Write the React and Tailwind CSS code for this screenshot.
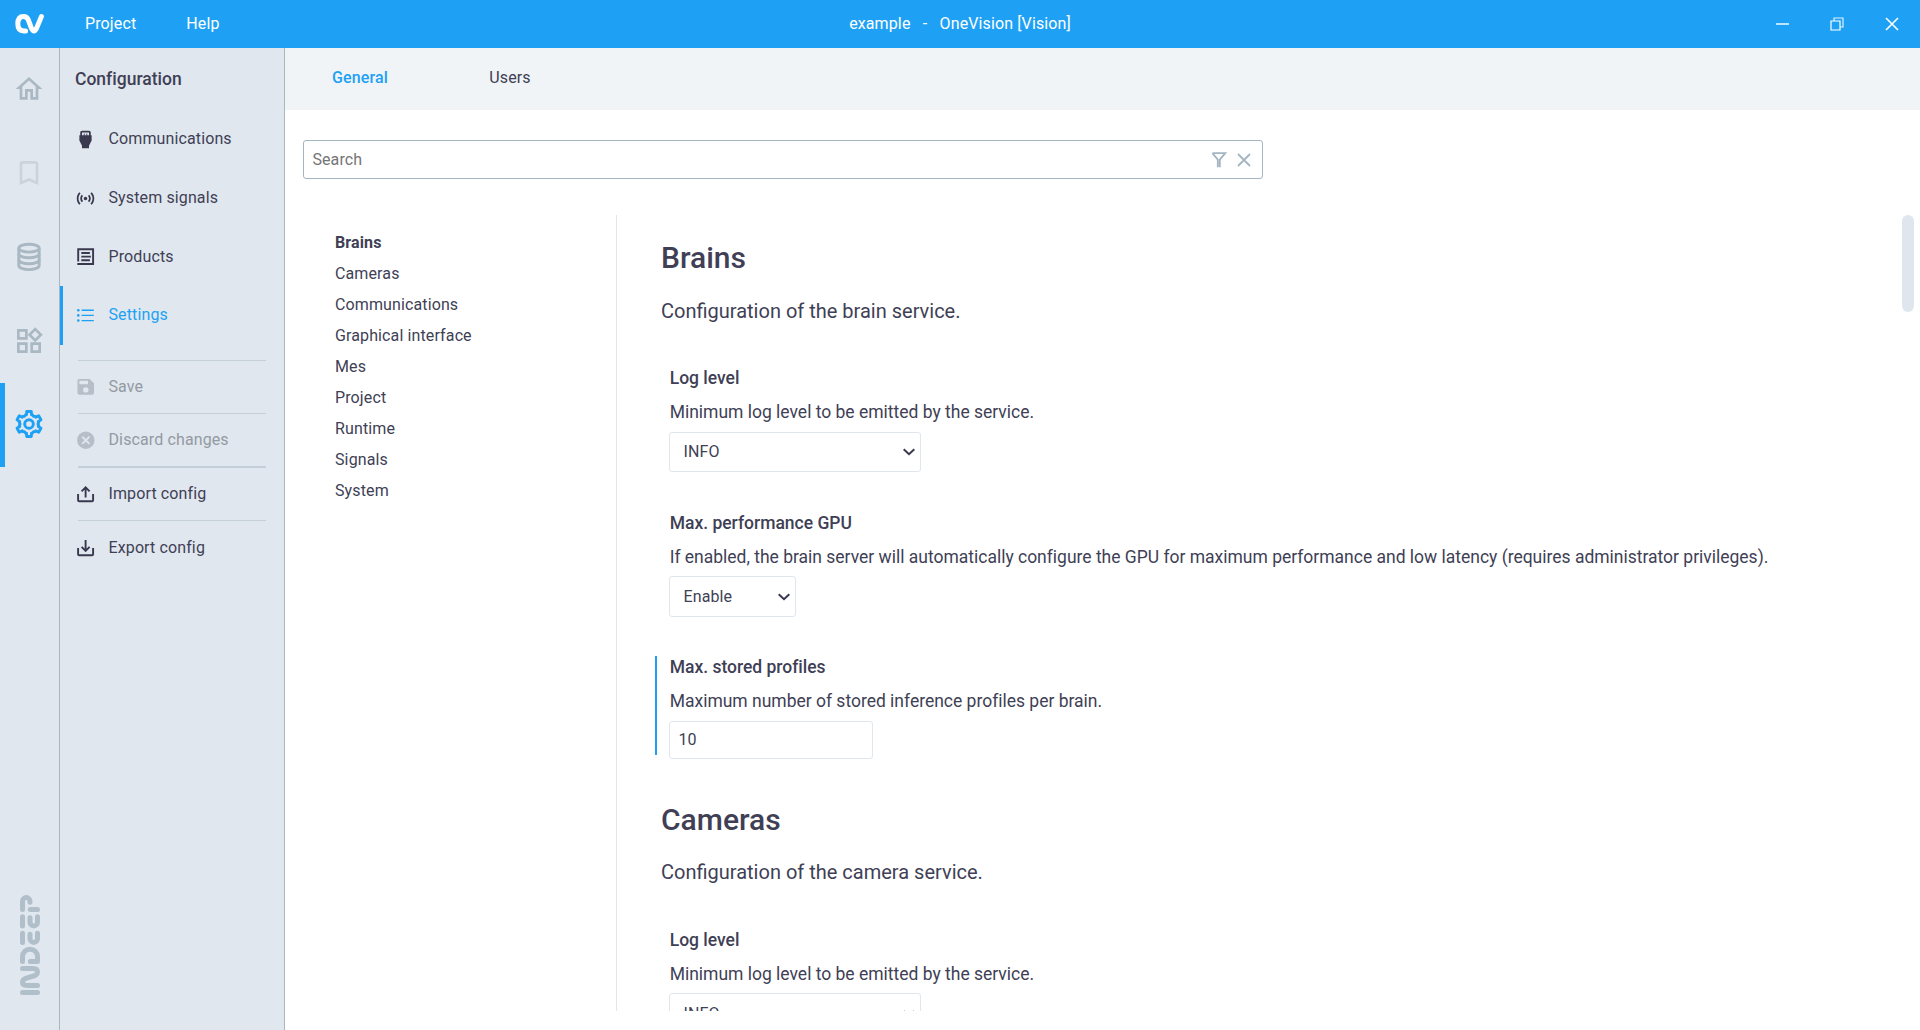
import React from "react";
import {
  MdOutlineHome,
  MdBookmarkBorder,
  MdOutlineWidgets,
  MdSettingsInputHdmi,
  MdSensors,
} from "react-icons/md";

const BrandMark = () => (
  <svg width="30" height="22" viewBox="0 0 30 22" fill="none" stroke="#fff" strokeWidth="5" strokeLinecap="round" strokeLinejoin="round">
    <path d="M10.6 17.9H8.8Q2.8 17.9 2.8 10.8Q2.8 3.4 8.6 3.4Q12 3.4 13.2 6.6L16.6 15.6Q19 20.2 21.4 15.6L26.4 3.6" />
  </svg>
);

const IndeepLogo = () => (
  <svg width="20" height="100" viewBox="0 0 20 100" fill="none" stroke="#b1bfca" strokeWidth="5" strokeLinecap="round" strokeLinejoin="round">
    <path d="M2.5 14.5V6.3A3.75 3.75 0 0 1 10 6.3V7.3" />
    <path d="M10.3 14.5H17.5" />
    <path d="M2.5 21.7V31M10 22.8V27.2A3.75 3.75 0 0 0 17.5 27.2V21.7" />
    <path d="M2.5 38.2V47.5M10 39.3V43.7A3.75 3.75 0 0 0 17.5 43.7V38.2" />
    <path d="M2.5 66.5V61.5A7.5 7.2 0 0 1 17.5 61.5V66.5H10.3" />
    <path d="M2.5 73.5H13Q17.5 73.5 17.5 77Q17.5 80 13.5 81L6.5 83.2Q2.5 84.5 2.5 87.3Q2.5 90.5 7 90.5H17.5" />
    <path d="M2.5 97.5H17.5" />
  </svg>
);

const DatabaseIcon = () => (
  <svg width="32" height="32" viewBox="0 0 32 32" fill="none" stroke="currentColor" strokeWidth="2.9">
    <ellipse cx="16" cy="7.2" rx="10.2" ry="3.9" />
    <path d="M5.8 7.2V24.6C5.8 26.9 10.4 28.6 16 28.6S26.2 26.9 26.2 24.6V7.2" />
    <path d="M5.8 12.8C5.8 15.1 10.4 16.8 16 16.8S26.2 15.1 26.2 12.8" />
    <path d="M5.8 18.7C5.8 21 10.4 22.7 16 22.7S26.2 21 26.2 18.7" />
  </svg>
);

// Six-toothed gear outline, listed as [radius, angle offset] around each tooth.
const TOOTH = [[8.9, -30], [9.9, -20], [9.6, -15], [12.7, -10.5], [12.7, 10.5], [9.6, 15], [9.9, 20]];
const GEAR = [0, 60, 120, 180, 240, 300]
  .flatMap((base) =>
    TOOTH.map(([r, offset]) => {
      const a = ((base + offset - 90) * Math.PI) / 180;
      return `${(16 + r * Math.cos(a)).toFixed(2)},${(16 + r * Math.sin(a)).toFixed(2)}`;
    })
  )
  .join(" ");

const GearIcon = () => (
  <svg width="32" height="32" viewBox="0 0 32 32" fill="none" stroke="currentColor" strokeWidth="2.9" strokeLinejoin="round">
    <polygon points={GEAR} />
    <circle cx="16" cy="16" r="4.3" />
  </svg>
);

const ProductsIcon = () => (
  <svg width="22" height="22" viewBox="0 0 22 22" fill="none" stroke="currentColor" strokeWidth="1.9">
    <path d="M3.2 15.6V3.2H18.1V18H2.3" />
    <path d="M6.3 7H14.9M6.3 10.6H15.9M6.3 14.2H14.9" />
  </svg>
);

const ListIcon = () => (
  <svg width="22" height="22" viewBox="0 0 22 22" fill="currentColor">
    <path d="M6.6 4.6H18.8V5.9H6.6zM6.6 9.8H18.8V11.1H6.6zM6.6 14.9H18.8V16.2H6.6z" />
    <circle cx="3.3" cy="5.2" r="1.3" />
    <circle cx="3.3" cy="10.4" r="1.3" />
    <circle cx="3.3" cy="15.5" r="1.3" />
  </svg>
);

const SaveIcon = () => (
  <svg width="22" height="22" viewBox="0 0 22 22" fill="currentColor" fillRule="evenodd">
    <path d="M4.3 3H14.6L19 7.2V16.9A1.8 1.8 0 0 1 17.2 18.7H4.3A1.8 1.8 0 0 1 2.5 16.9V4.8A1.8 1.8 0 0 1 4.3 3ZM4.4 4.7V8.3H13V4.7ZM10.8 11.2A2.7 2.7 0 1 0 10.8 16.6A2.7 2.7 0 1 0 10.8 11.2Z" />
  </svg>
);

const DiscardIcon = () => (
  <svg width="22" height="22" viewBox="0 0 22 22">
    <circle cx="10.8" cy="11.2" r="8.7" fill="currentColor" />
    <path d="M7.2 7.6L14.4 14.8M14.4 7.6L7.2 14.8" stroke="#e0e7ee" strokeWidth="1.8" />
  </svg>
);

const ImportIcon = () => (
  <svg width="22" height="22" viewBox="0 0 22 22" fill="none" stroke="currentColor" strokeWidth="1.9">
    <path d="M3.1 11V17.2Q3.1 18.3 4.2 18.3H17Q18.1 18.3 18.1 17.2V11" />
    <path d="M10.6 14.6V4.6M6.6 8.4L10.6 4.4L14.6 8.4" />
  </svg>
);

const ExportIcon = () => (
  <svg width="22" height="22" viewBox="0 0 22 22" fill="none" stroke="currentColor" strokeWidth="1.9">
    <path d="M3.1 11V17.2Q3.1 18.3 4.2 18.3H17Q18.1 18.3 18.1 17.2V11" />
    <path d="M10.6 3V13.6M6.6 9.9L10.6 13.9L14.6 9.9" />
  </svg>
);

const Chevron = () => (
  <svg width="14" height="10" viewBox="0 0 14 10" fill="none" stroke="#39384f" strokeWidth="2">
    <path d="M1.7 2.2L7 7.2L12.3 2.2" />
  </svg>
);

function TitleBar() {
  return (
    <header className="grid h-12 shrink-0 grid-cols-3 items-center bg-[#1ea1f4] text-white">
      <div className="flex items-center">
        <div className="ml-[15px] mr-[39px]"><BrandMark /></div>
        <span className="w-[102px] pl-[1px]">Project</span>
        <span className="pl-[0.3px]">Help</span>
      </div>
      <div className="whitespace-pre text-center">{"example   -   OneVision [Vision]"}</div>
      <div className="flex items-center justify-end gap-[41px] pr-[21px]">
        <svg width="14" height="14" viewBox="0 0 14 14" fill="#fff"><path fillOpacity=".7" d="M1 6H14V8H1z" /></svg>
        <svg width="14" height="14" viewBox="0 0 14 14" fill="none" stroke="#fff" strokeWidth="1.2">
          <path d="M1 4H10V13H1z" />
          <path d="M4 4V1H13V10H10" strokeOpacity=".85" />
        </svg>
        <svg width="14" height="14" viewBox="0 0 14 14" fill="none" stroke="#fff" strokeWidth="1.6"><path d="M1 1L13 13M13 1L1 13" /></svg>
      </div>
    </header>
  );
}

function RailItem({ children, active, dim }) {
  return (
    <div className="flex h-[83.75px] items-center">
      <div className={active ? "h-full w-[5px] bg-[#1ea1f4]" : "w-[5px]"} />
      <div className={"-mt-[1px] ml-[8px] " + (active ? "text-[#1ea1f4]" : dim ? "text-[#cbd4da]" : "text-[#a9b8c2]")}>{children}</div>
    </div>
  );
}

function Rail() {
  return (
    <nav className="flex w-[60px] shrink-0 flex-col border-r border-[#a9b8c0] bg-[#e0e7ee]">
      <RailItem><MdOutlineHome size={32} /></RailItem>
      <RailItem dim><MdBookmarkBorder size={32} /></RailItem>
      <RailItem><DatabaseIcon /></RailItem>
      <RailItem><MdOutlineWidgets size={32} /></RailItem>
      <RailItem active><GearIcon /></RailItem>
      <div className="mb-[35px] ml-5 mt-auto"><IndeepLogo /></div>
    </nav>
  );
}

function PanelItem({ icon, label, active }) {
  return (
    <div className={"flex h-[59px] items-center " + (active ? "text-[#1ea1f4]" : "")}>
      <div className={active ? "h-full w-[3px] bg-[#1ea1f4]" : "w-[3px]"} />
      <div className="ml-[11.5px] mt-[1px] flex w-[22px] justify-center text-[#39384f]">
        <span className={active ? "text-[#1ea1f4]" : ""}>{icon}</span>
      </div>
      <span className={"ml-[12px] " + (active ? "-mt-[1px]" : "")}>{label}</span>
    </div>
  );
}

function PanelAction({ icon, label, disabled, thick, last }) {
  return (
    <div className={"ml-[18px] mr-[18px] flex items-center border-[#c3d0d9] " + (thick ? "h-[54px] border-t-2 " : "h-[53px] border-t ") + (last ? "pt-[2px] " : "") + (disabled ? "text-[#939aa3]" : "")}>
      <div className={"-ml-[3.5px] flex w-[22px] justify-center " + (disabled ? "text-[#b8bec8]" : "text-[#39384f]")}>{icon}</div>
      <span className="ml-[12px]">{label}</span>
    </div>
  );
}

function ConfigPanel() {
  return (
    <aside className="w-[225px] shrink-0 border-r border-[#a9b8c0] bg-[#e0e7ee]">
      <h2 className="flex h-[61px] items-center pl-[15px] pt-[1px] text-[17.5px] font-medium tracking-[0.01px]">Configuration</h2>
      <PanelItem icon={<MdSettingsInputHdmi size={21} />} label="Communications" />
      <PanelItem icon={<MdSensors size={21} />} label="System signals" />
      <PanelItem icon={<ProductsIcon />} label="Products" />
      <PanelItem icon={<ListIcon />} label="Settings" active />
      <div className="mt-[15px]">
        <PanelAction icon={<SaveIcon />} label="Save" disabled />
        <PanelAction icon={<DiscardIcon />} label="Discard changes" disabled />
        <PanelAction icon={<ImportIcon />} label="Import config" thick />
        <PanelAction icon={<ExportIcon />} label="Export config" last />
      </div>
    </aside>
  );
}

function SearchBox() {
  return (
    <div className="ml-[18px] mt-[30px] flex h-[39px] w-[960px] shrink-0 items-center rounded-[3px] border border-[#a4b5c2] pl-[8.4px] text-[#757575]">
      <span>Search</span>
      <svg className="ml-auto mr-[10px]" width="16" height="16" viewBox="0 0 16 16" fill="none" stroke="#a4b5c2" strokeWidth="1.8">
        <path d="M1.4 1.2H14.2L8.8 7.6V15.2M1.4 1.2L6.8 7.6V15.2" />
      </svg>
      <svg className="mr-[11.5px]" width="14" height="14" viewBox="0 0 14 14" fill="none" stroke="#a4b5c2" strokeWidth="1.8">
        <path d="M1 1L13 13M13 1L1 13" />
      </svg>
    </div>
  );
}

function SelectBox({ value, width }) {
  return (
    <div className={"flex h-[40.3px] items-center justify-between rounded-[3px] border border-[#dfe6ed] pl-[13.5px] pr-[4px] " + width}>
      <span>{value}</span>
      <div className="mt-[1px]"><Chevron /></div>
    </div>
  );
}

function Setting({ label, description, changed, last, children }) {
  return (
    <div className={"flex " + (last ? "mb-[37.6px]" : "mb-[38.5px]")}>
      <div className={changed ? "mb-[4px] mt-[1px] w-[2px] bg-[#1ea1f4]" : "w-[2px]"} />
      <div className="ml-3">
        <h3 className="h-6 pl-[0.7px] text-[17.5px] font-medium leading-6 tracking-[-0.01px]">{label}</h3>
        <p className="mb-[7.8px] mt-[10px] h-6 whitespace-nowrap pl-[0.7px] text-[17.5px] leading-6 tracking-[-0.01px]">{description}</p>
        {children}
      </div>
    </div>
  );
}

function Section({ title, description, children }) {
  return (
    <section>
      <h1 className="pl-[6px] text-[30px] font-medium leading-[46px] tracking-normal">{title}</h1>
      <p className="mb-[40.5px] mt-[14.5px] pl-[6px] text-[20px] leading-[30px] tracking-normal">{description}</p>
      {children}
    </section>
  );
}

const NAV = ["Brains", "Cameras", "Communications", "Graphical interface", "Mes", "Project", "Runtime", "Signals", "System"];

export default function App() {
  return (
    <div className="flex h-[1030px] w-[1920px] flex-col overflow-hidden bg-white font-['Roboto',sans-serif] text-[16px] leading-6 tracking-[0.12px] text-[#403f56]">
      <TitleBar />
      <div className="flex min-h-0 flex-1">
        <Rail />
        <ConfigPanel />
        <main className="flex min-w-0 flex-1 flex-col">
          <div className="flex h-[62px] shrink-0 items-center bg-[#f0f4f7] pb-[3px]">
            <span className="w-[157px] pl-[47px] font-medium text-[#1ea1f4]">General</span>
            <span className="pl-[47.3px]">Users</span>
          </div>
          <SearchBox />
          <div className="mb-[19px] mt-9 flex min-h-0 flex-1 overflow-hidden">
            <ul className="w-[332px] shrink-0 border-r border-[#dfe6ed] pl-[50px] pt-3">
              {NAV.map((item, i) => (
                <li key={item} className={"h-[31px] leading-[31px] " + (i === 0 ? "font-bold" : "")}>{item}</li>
              ))}
            </ul>
            <div className="min-w-0 flex-1 overflow-hidden pl-[38px] pt-5">
              <Section title="Brains" description="Configuration of the brain service.">
                <Setting label="Log level" description="Minimum log level to be emitted by the service.">
                  <SelectBox value="INFO" width="w-[252px]" />
                </Setting>
                <Setting label="Max. performance GPU" description="If enabled, the brain server will automatically configure the GPU for maximum performance and low latency (requires administrator privileges).">
                  <SelectBox value="Enable" width="w-[127px]" />
                </Setting>
                <Setting label="Max. stored profiles" description="Maximum number of stored inference profiles per brain." changed last>
                  <div className="flex h-[38px] w-[204px] items-center rounded-[3px] border border-[#dfe6ed] pl-[8.5px]">10</div>
                </Setting>
              </Section>
              <Section title="Cameras" description="Configuration of the camera service.">
                <Setting label="Log level" description="Minimum log level to be emitted by the service.">
                  <SelectBox value="INFO" width="w-[252px]" />
                </Setting>
              </Section>
            </div>
            <div className="mr-[6px] h-[97px] w-3 shrink-0 rounded-full bg-[#dfe6ed]" />
          </div>
        </main>
      </div>
    </div>
  );
}
